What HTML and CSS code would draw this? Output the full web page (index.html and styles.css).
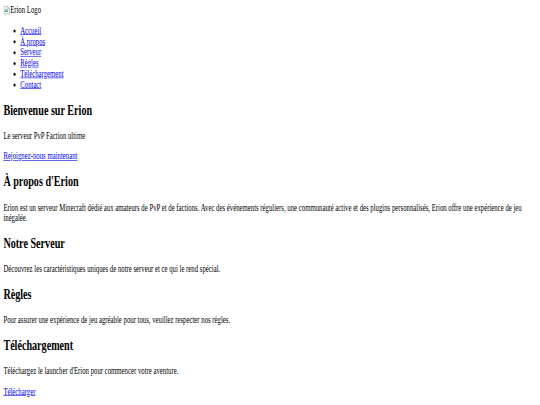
FILE: index.html
```html
<!DOCTYPE html>
<html lang="fr">
<head>
<meta charset="utf-8">
<title>Erion</title>
<link rel="stylesheet" href="styles.css">
</head>
<body>
<div class="frame">
<div class="page">
  <header>
    <div class="logo"><svg class="broken" width="16" height="16" viewBox="0 0 16 16"><path d="M1.5 1.5h9l4 4v9h-13z" fill="#f4f4f4" stroke="#9a9a9a"/><path d="M10.5 1.5v4h4" fill="none" stroke="#9a9a9a"/><rect x="3" y="6" width="8" height="5" fill="#8fc4ee"/><path d="M3 11l3-3 2 2 1-1 2 2z" fill="#4caf50"/></svg>Erion Logo</div>
    <nav>
      <ul>
        <li><a href="#">Accueil</a></li>
        <li><a href="#">À propos</a></li>
        <li><a href="#">Serveur</a></li>
        <li><a href="#">Règles</a></li>
        <li><a href="#">Téléchargement</a></li>
        <li><a href="#">Contact</a></li>
      </ul>
    </nav>
  </header>
  <section>
    <h2>Bienvenue sur Erion</h2>
    <p>Le serveur PvP Faction ultime</p>
    <p><a href="#">Rejoignez-nous maintenant</a></p>
  </section>
  <section>
    <h2>À propos d'Erion</h2>
    <p>Erion est un serveur Minecraft dédié aux amateurs de PvP et de factions. Avec des événements réguliers, une communauté active et des plugins personnalisés, Erion offre une expérience de jeu inégalée.</p>
  </section>
  <section>
    <h2>Notre Serveur</h2>
    <p>Découvrez les caractéristiques uniques de notre serveur et ce qui le rend spécial.</p>
  </section>
  <section>
    <h2>Règles</h2>
    <p>Pour assurer une expérience de jeu agréable pour tous, veuillez respecter nos règles.</p>
  </section>
  <section>
    <h2>Téléchargement</h2>
    <p>Téléchargez le launcher d'Erion pour commencer votre aventure.</p>
    <p><a href="#">Télécharger</a></p>
  </section>
</div>
</div>
</body>
</html>
```
FILE: styles.css
```css
html, body {
  margin: 0;
  padding: 0;
  overflow: hidden;
  background: #fff;
}
.frame {
  width: 540px;
  height: 405px;
  overflow: hidden;
}
.page {
  width: 1280px;
  box-sizing: border-box;
  padding: 8px;
  font-family: "Liberation Serif", "Times New Roman", serif;
  font-size: 16px;
  color: #000;
  transform: scale(0.421875, 0.6015);
  transform-origin: 0 0;
}
.logo {
  line-height: 18px;
  height: 18px;
}
.broken {
  vertical-align: -3px;
}
ul {
  margin: 16px 0;
  padding-left: 40px;
}
h2 {
  font-size: 24px;
  font-weight: bold;
  margin: 19.92px 0;
}
p {
  margin: 16px 0;
}
a {
  color: #0000ee;
}
```
